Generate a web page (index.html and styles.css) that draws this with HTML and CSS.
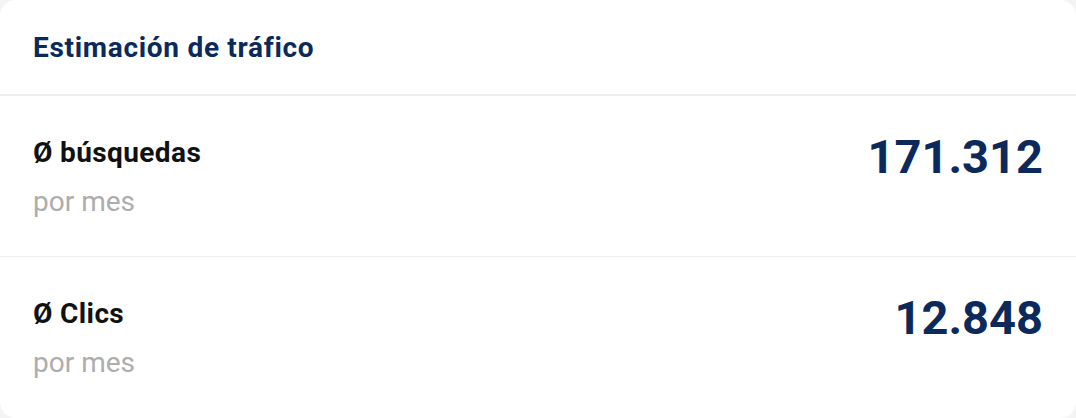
FILE: index.html
```html
<!DOCTYPE html>
<html lang="es">
<head>
<meta charset="utf-8">
<title>Estimación de tráfico</title>
<link rel="stylesheet" href="styles.css">
</head>
<body>
<section class="card">
  <header class="card-header">
    <h2 class="card-title">Estimación de tráfico</h2>
  </header>
  <div class="stat-row">
    <div class="stat-label">
      <div class="stat-name">Ø búsquedas</div>
      <div class="stat-sub">por mes</div>
    </div>
    <div class="stat-value">171.312</div>
  </div>
  <div class="stat-row">
    <div class="stat-label">
      <div class="stat-name">Ø Clics</div>
      <div class="stat-sub">por mes</div>
    </div>
    <div class="stat-value">12.848</div>
  </div>
</section>
</body>
</html>
```

FILE: styles.css
```css
html, body {
  margin: 0;
  padding: 0;
  background: #f4f4f4;
}

body {
  font-family: Roboto, "Liberation Sans", Arial, sans-serif;
  width: 1076px;
  height: 418px;
  overflow: hidden;
}

.card {
  background: #ffffff;
  border-radius: 16px;
  height: 418px;
  box-sizing: border-box;
  overflow: hidden;
}

.card-header {
  padding: 28px 33px 26px;
  border-bottom: 2px solid #eeeeee;
}

.card-title {
  margin: 0;
  font-size: 28px;
  line-height: 40px;
  font-weight: 700;
  color: #0b2a5b;
  letter-spacing: 0.7px;
}

.stat-row {
  display: flex;
  justify-content: space-between;
  align-items: flex-start;
  padding: 37px 33px 34px;
  border-bottom: 1px solid #eeeeee;
}

.stat-row:last-child {
  border-bottom: none;
}

.stat-name {
  font-size: 28px;
  line-height: 40px;
  font-weight: 700;
  color: #111111;
  letter-spacing: 0.4px;
}

.stat-sub {
  margin-top: 9px;
  font-size: 28px;
  line-height: 40px;
  color: #adadad;
}

.stat-value {
  margin-top: 0;
  font-size: 47px;
  line-height: 48px;
  font-weight: 700;
  color: #0b2a5b;
}
```
